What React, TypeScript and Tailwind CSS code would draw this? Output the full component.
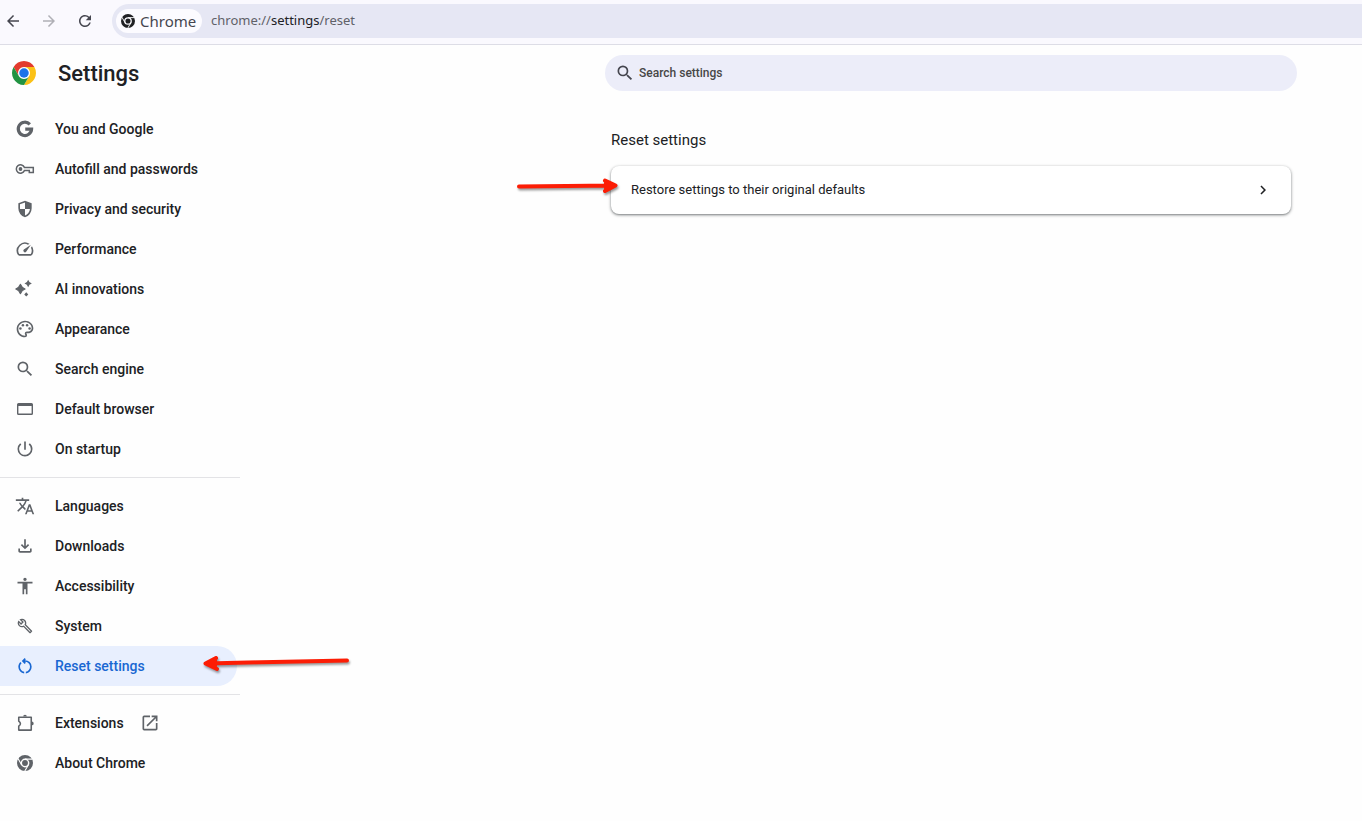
import type { ComponentType } from 'react';
import {
  MdAccessibility,
  MdArrowBack,
  MdArrowForward,
  MdChevronRight,
  MdOpenInNew,
  MdOutlineBuild,
  MdOutlinePalette,
  MdOutlineSpeed,
  MdPowerSettingsNew,
  MdRefresh,
  MdSearch,
  MdTranslate,
} from 'react-icons/md';

interface IconProps {
  className?: string;
}

interface NavItem {
  label: string;
  icon: ComponentType<IconProps>;
  small?: boolean;
  active?: boolean;
  external?: boolean;
}

// Single colour Chrome mark
function ChromeMono({ className }: IconProps) {
  return (
    <svg viewBox="0 0 24 24" className={className} fill="none" aria-hidden="true">
      <circle cx="12" cy="12" r="9.3" stroke="currentColor" strokeWidth="5.400" />
      <circle cx="12" cy="12" r="4.400" fill="currentColor" />
      <path d="M12 6.200h11M7 14.900 1.500 5.400M17 14.900l-5.500 9.500" stroke="white" strokeWidth="1.600" />
    </svg>
  );
}

function ChromeLogo({ className }: IconProps) {
  return (
    <svg viewBox="0 0 48 48" className={className} aria-hidden="true">
      <circle cx="24" cy="24" r="12" fill="#fff" />
      <path d="M24 12h20.780a24 24 0 0 0-41.560 0L13.610 30A12 12 0 0 1 24 12z" fill="#e33b2e" />
      <path d="M34.390 30 24 48a24 24 0 0 0 20.780-36H24a12 12 0 0 1 10.390 18z" fill="#fbc116" />
      <path d="M13.610 30 3.220 12A24 24 0 0 0 24 48l10.390-18a12 12 0 0 1-20.780 0z" fill="#229342" />
      <circle cx="24" cy="24" r="9.500" fill="#1a73e8" />
    </svg>
  );
}

function GoogleIcon({ className }: IconProps) {
  return (
    <svg viewBox="0 0 24 24" className={className} fill="none" stroke="currentColor" strokeWidth="3.800" aria-hidden="true">
      <path d="M17.800 6.400A8 8 0 1 0 19.900 12.200H12.300" />
    </svg>
  );
}

function KeyIcon({ className }: IconProps) {
  return (
    <svg viewBox="0 0 20 20" className={className} fill="none" stroke="currentColor" strokeWidth="1.500" aria-hidden="true">
      <path d="M9.400 8.400H18.300V13.400H14.300V11.600H9.400A4.200 4.200 0 1 1 9.400 8.400z" />
      <circle cx="5.500" cy="10" r="1.900" fill="currentColor" stroke="none" />
    </svg>
  );
}

function ShieldIcon({ className }: IconProps) {
  return (
    <svg viewBox="0 -960 960 960" className={className} fill="currentColor" aria-hidden="true">
      <path d="M480-80q-139-35-229.500-159.500T160-516v-244l320-120 320 120v244q0 152-90.500 276.500T480-80Zm0-84q97-30 162-118.500T718-480H480v-315l-240 90v207q0 7 2 18h238v316Z" />
    </svg>
  );
}

function Sparkles({ className }: IconProps) {
  return (
    <svg viewBox="0 0 24 24" className={className} fill="currentColor" aria-hidden="true">
      <path d="M6.500 6.500q1.500 4 5.500 5.500-4 1.500-5.500 5.500Q5 13.500 1 12q4-1.500 5.500-5.500z" stroke="currentColor" strokeWidth="1.600" strokeLinejoin="round" />
      <path d="M15.800 1q1 3.500 4.400 4.500-3.400 1-4.400 4.500-1-3.500-4.400-4.500 3.400-1 4.400-4.500z" />
      <path d="M13.500 16l2.400 2.500-2.400 2.500-2.400-2.500z" />
    </svg>
  );
}

function BrowserIcon({ className }: IconProps) {
  return (
    <svg viewBox="0 0 20 20" className={className} fill="currentColor" aria-hidden="true">
      <path fillRule="evenodd" d="M3.500 4h13A1.500 1.500 0 0 1 18 5.500v9a1.500 1.500 0 0 1-1.500 1.500h-13A1.500 1.500 0 0 1 2 14.500v-9A1.500 1.500 0 0 1 3.500 4zM3.400 7v7.600h13.200V7z" />
    </svg>
  );
}

function DownloadIcon({ className }: IconProps) {
  return (
    <svg viewBox="0 -960 960 960" className={className} fill="currentColor" aria-hidden="true">
      <path d="M480-320 280-520l56-58 104 104v-326h80v326l104-104 56 58-200 200ZM240-160q-33 0-56.500-23.500T160-240v-120h80v120h480v-120h80v120q0 33-23.500 56.500T720-160H240Z" />
    </svg>
  );
}

function ResetIcon({ className }: IconProps) {
  return (
    <svg viewBox="0 -960 960 960" className={className} fill="currentColor" aria-hidden="true">
      <path d="M440-122q-121-15-200.500-105.500T160-440q0-66 26-126.500T260-672l57 57q-38 34-57.500 79T240-440q0 88 56 155.500T440-202v80Zm80 0v-80q87-16 143.500-83T720-440q0-100-70-170t-170-70h-3l44 44-56 56-140-140 140-140 56 56-44 44h3q134 0 227 93t93 227q0 121-79.500 211.500T520-122Z" />
    </svg>
  );
}

function PuzzleIcon({ className }: IconProps) {
  return (
    <svg viewBox="0 0 24 24" className={className} fill="none" aria-hidden="true">
      <path d="M4.500 5h15v15.500h-15v-4.700q4-3 0-6z" stroke="currentColor" strokeWidth="1.900" strokeLinejoin="round" />
      <path d="M9.800 4.300a2.200 2.200 0 0 1 4.400 0zM20.200 10.300a2.200 2.200 0 0 1 0 4.400z" fill="currentColor" />
    </svg>
  );
}

const groups: NavItem[][] = [
  [
    { label: 'You and Google', icon: GoogleIcon },
    { label: 'Autofill and passwords', icon: KeyIcon },
    { label: 'Privacy and security', icon: ShieldIcon },
    { label: 'Performance', icon: MdOutlineSpeed },
    { label: 'AI innovations', icon: Sparkles },
    { label: 'Appearance', icon: MdOutlinePalette },
    { label: 'Search engine', icon: MdSearch },
    { label: 'Default browser', icon: BrowserIcon },
    { label: 'On startup', icon: MdPowerSettingsNew },
  ],
  [
    { label: 'Languages', icon: MdTranslate },
    { label: 'Downloads', icon: DownloadIcon },
    { label: 'Accessibility', icon: MdAccessibility },
    { label: 'System', icon: MdOutlineBuild, small: true },
    { label: 'Reset settings', icon: ResetIcon, active: true },
  ],
  [
    { label: 'Extensions', icon: PuzzleIcon, external: true },
    { label: 'About Chrome', icon: ChromeMono, small: true },
  ],
];

function Toolbar() {
  return (
    <header className="flex h-[45px] items-start border-b border-[#dddde6] bg-[#faf9fe] pt-1 font-['Noto_Sans',sans-serif] text-[#45464f]">
      <div className="flex h-[34px] w-[112px] shrink-0 items-center gap-[18px] pl-1">
        <button type="button" aria-label="Back" className="text-[#45464f]">
          <MdArrowBack className="size-[18px]" />
        </button>
        <button type="button" aria-label="Forward" className="text-[#b0b0b6]">
          <MdArrowForward className="size-[18px]" />
        </button>
        <button type="button" aria-label="Reload" className="text-[#45464f]">
          <MdRefresh className="size-[18px]" />
        </button>
      </div>
      <div className="flex h-[34px] flex-1 items-center rounded-l-full bg-[#e6e7f4] pl-1">
        <button type="button" className="flex h-6 w-[86px] shrink-0 items-center gap-[5px] rounded-full bg-[#fcfbff] pl-[5px] text-[15px] text-[#45464f]">
          <ChromeMono className="size-[14px] shrink-0 text-[#202124]" />
          Chrome
        </button>
        <a href="#reset" className="ml-[9px] text-[13px] text-[#606168]">
          chrome://<span className="text-[#202124]">settings</span>/reset
        </a>
      </div>
    </header>
  );
}

function NavLink({ item }: { item: NavItem }) {
  const Icon = item.icon;
  return (
    <li>
      <a
        href="#"
        aria-current={item.active ? 'page' : undefined}
        className={`mr-[3px] flex h-10 items-center rounded-r-full pl-[15px] text-sm font-medium ${
          item.active ? 'bg-[#e8effe] text-[#1967d2]' : 'text-[#202124]'
        }`}
      >
        <span className={`flex size-5 shrink-0 items-center justify-center ${item.active ? 'text-[#1967d2]' : 'text-[#5f6368]'}`}>
          <Icon className={item.small ? 'size-4' : 'size-5'} />
        </span>
        <span className="ml-5">{item.label}</span>
        {item.external && <MdOpenInNew className="ml-4 size-5 text-[#5f6368]" />}
      </a>
    </li>
  );
}

function Sidebar() {
  return (
    <aside className="relative w-60 shrink-0">
      <div className="flex h-14 items-center gap-[22px] pl-3">
        <ChromeLogo className="size-6" />
        <h1 className="text-[22px] font-medium text-[#202124]">Settings</h1>
      </div>
      <nav aria-label="Settings" className="pt-2">
        {groups.map((group, index) => (
          <ul key={index} className={index > 0 ? 'mt-2 border-t border-[#e3e3e6] pt-2' : ''}>
            {group.map((item) => (
              <NavLink key={item.label} item={item} />
            ))}
          </ul>
        ))}
      </nav>
      <svg
        viewBox="0 0 152 24"
        className="absolute top-[605px] left-[200px] w-[152px] drop-shadow-[1px_2px_1px_#00000066]"
        fill="none"
        stroke="#fc1d05"
        strokeWidth="4"
        strokeLinecap="round"
        strokeLinejoin="round"
        aria-hidden="true"
      >
        <path d="M6 13.500 147 10.500M16 8 5.500 13.500 17 19" />
        <path d="M8 13.500l7-3v5.500z" />
      </svg>
    </aside>
  );
}

export default function App() {
  return (
    <div className="min-h-screen bg-[#fefefe] font-[Roboto,sans-serif] text-[#202124]">
      <Toolbar />
      <div className="flex">
        <Sidebar />
        <main className="flex flex-1 justify-end pr-[65px] pl-4">
          <div className="w-full max-w-[692px] pt-[10px]">
            <label className="flex h-9 items-center gap-1 rounded-full bg-[#ecedf9] pl-[10px]">
              <MdSearch className="size-5 shrink-0 text-[#45464f]" />
              <input
                type="search"
                aria-label="Search settings"
                placeholder="Search settings"
                className="min-w-0 flex-1 bg-transparent text-xs font-medium outline-none placeholder:text-[#474747]"
              />
            </label>
            <section className="px-[6px] pt-[39px]">
              <h2 className="text-[15px] leading-5">Reset settings</h2>
              <div className="relative mt-4">
                <button
                  type="button"
                  className="flex h-12 w-full items-center justify-between rounded-lg bg-white pr-[19px] pl-5 text-left text-[13px] shadow-[0_1px_3px_1px_#3c404333,0_1px_2px_#3c404380]"
                >
                  Restore settings to their original defaults
                  <MdChevronRight className="size-[18px]" />
                </button>
                <svg
                  viewBox="0 0 106 24"
                  className="absolute top-[8px] -left-[96px] w-[106px] drop-shadow-[1px_2px_1px_#00000066]"
                  fill="none"
                  stroke="#fc1d05"
                  strokeWidth="4"
                  strokeLinecap="round"
                  strokeLinejoin="round"
                  aria-hidden="true"
                >
                  <path d="M4 12.500 99 11.500M90 6.500 100.500 11.500 90 17" />
                  <path d="M98 11.500l-7-2.500v5.500z" />
                </svg>
              </div>
            </section>
          </div>
        </main>
      </div>
    </div>
  );
}
